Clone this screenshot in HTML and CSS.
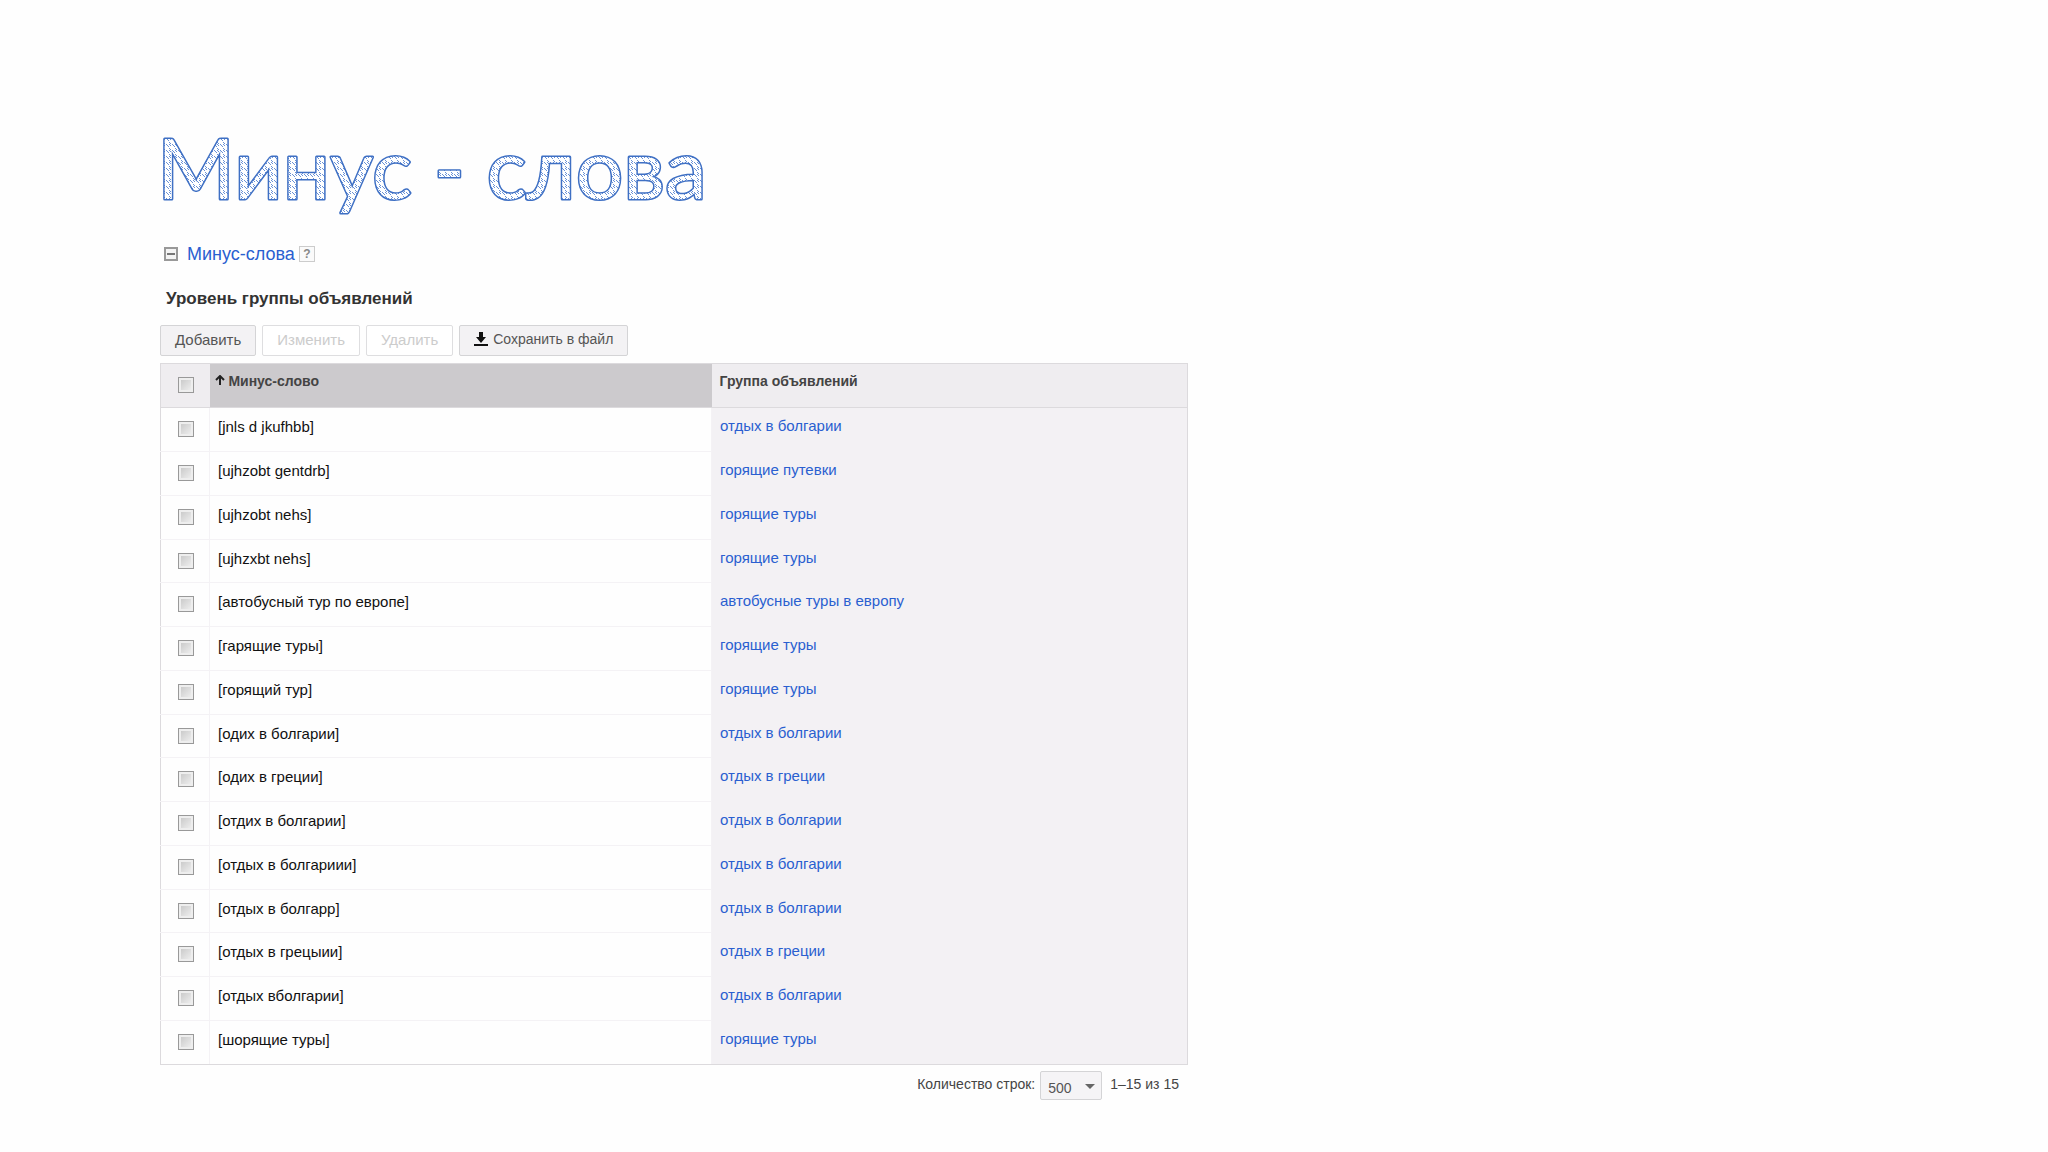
FILE: index.html
```html
<!DOCTYPE html>
<html lang="ru">

<head>
    <meta charset="UTF-8">
    <meta name="viewport" content="width=device-width, initial-scale=1.0">
    <title>Минус-слова</title>
    <link rel="stylesheet" href="styles.css">
</head>

<body>
    <main class="slide">
        <h1>
            <svg class="title" width="600" height="100">
                <defs>
                    <pattern id="hatch" width="6" height="6" patternUnits="userSpaceOnUse">
                        <rect width="6" height="6" fill="#fff" />
                        <path d="M0 0l3 3M3 4l2 2M3 0l2 2" stroke="#6a92d6" />
                    </pattern>
                </defs>
                <text x="-3" y="79">Минус - слова</text>
            </svg>
        </h1>

        <section class="panel">
            <div class="section-toggle">
                <button class="collapse" aria-label="Свернуть"></button>
                <a href="#">Минус-слова</a>
                <button class="help" aria-label="Справка">?</button>
            </div>

            <h2>Уровень группы объявлений</h2>

            <div class="toolbar">
                <button class="btn">Добавить</button>
                <button class="btn" disabled>Изменить</button>
                <button class="btn" disabled>Удалить</button>
                <button class="btn btn-download">
                    <svg width="14" height="14" viewBox="0 0 14 14">
                        <path d="M5 0h4v5h3L7 11 2 5h3z M0 12h14v2H0z" fill="#111" />
                    </svg>
                    Сохранить в файл
                </button>
            </div>

            <table class="keywords">
                <thead>
                    <tr>
                        <th class="check"><input type="checkbox" aria-label="Выбрать все"></th>
                        <th class="sorted">
                            <svg width="10" height="10" viewBox="0 0 10 10">
                                <path d="M5 10V2M1 5l4-4 4 4" fill="none" stroke="#222" stroke-width="2" />
                            </svg>
                            Минус-слово
                        </th>
                        <th class="group">Группа объявлений</th>
                    </tr>
                </thead>
                <tbody id="rows"></tbody>
            </table>

            <div class="pager">
                <label for="pageSize">Количество строк:</label>
                <div class="select-wrap">
                    <select id="pageSize">
                        <option>50</option>
                        <option>100</option>
                        <option selected>500</option>
                    </select>
                </div>
                <span>1–15 из 15</span>
            </div>
        </section>
    </main>

    <script>
        const keywords = [
            ['[jnls d jkufhbb]', 'отдых в болгарии'],
            ['[ujhzobt gentdrb]', 'горящие путевки'],
            ['[ujhzobt nehs]', 'горящие туры'],
            ['[ujhzxbt nehs]', 'горящие туры'],
            ['[автобусный тур по европе]', 'автобусные туры в европу'],
            ['[гарящие туры]', 'горящие туры'],
            ['[горящий тур]', 'горящие туры'],
            ['[одих в болгарии]', 'отдых в болгарии'],
            ['[одих в греции]', 'отдых в греции'],
            ['[отдих в болгарии]', 'отдых в болгарии'],
            ['[отдых в болгариии]', 'отдых в болгарии'],
            ['[отдых в болгарр]', 'отдых в болгарии'],
            ['[отдых в грецыии]', 'отдых в греции'],
            ['[отдых вболгарии]', 'отдых в болгарии'],
            ['[шорящие туры]', 'горящие туры']
        ];

        document.getElementById('rows').innerHTML = keywords.map(([word, group], i) => `
            <tr>
                <td class="check"><input type="checkbox" id="kw${i}"></td>
                <td><label for="kw${i}">${word}</label></td>
                <td class="group"><a href="#">${group}</a></td>
            </tr>`).join('');
    </script>
</body>

</html>
```

FILE: styles.css
```css
* {
    box-sizing: border-box;
}

body {
    margin: 0;
    background-color: #fefefe;
    color: #444;
    font-family: "Liberation Sans", Arial, sans-serif;
    font-size: 15px;
}

a {
    color: #2a5fd0;
    text-decoration: none;
}

button,
select {
    font-family: inherit;
}

.slide {
    padding: 120px 160px 40px;
}

h1 {
    margin: 0;
    font-family: Lato, "Open Sans", sans-serif;
    font-size: 84px;
    font-weight: 400;
    line-height: 100px;
}

.title {
    display: block;
    overflow: visible;
}

.title text {
    fill: url(#hatch);
    stroke: #3f70c4;
    stroke-width: 3px;
    stroke-linejoin: round;
    paint-order: stroke;
}

.panel {
    width: 60%;
    max-width: 1028px;
    margin-top: 20px;
}

.section-toggle {
    display: flex;
    align-items: center;
    height: 28px;
    padding-left: 4px;
    font-size: 18px;
}

.collapse {
    width: 14px;
    height: 14px;
    margin-right: 9px;
    padding: 0;
    border: 2px solid #999;
    background: linear-gradient(#777, #777) center / 8px 2px no-repeat #f4f4f4;
}

.help {
    width: 16px;
    height: 16px;
    margin-left: 4px;
    padding: 0;
    border: 1px solid #ccc;
    background-color: #fafafa;
    color: #888;
    font-size: 12px;
    font-weight: bold;
    line-height: 14px;
}

h2 {
    margin: 19px 0 14px;
    padding-left: 6px;
    color: #333;
    font-size: 17px;
    line-height: 24px;
}

.toolbar {
    display: flex;
    gap: 6px;
    margin-bottom: 7px;
}

.btn {
    display: flex;
    align-items: center;
    gap: 5px;
    height: 31px;
    padding: 0 14px 3px;
    border: 1px solid #d4d4d6;
    border-radius: 2px;
    background-color: #f3f2f4;
    color: #555;
    font-size: 15px;
}

.btn:disabled {
    border-color: #dedee0;
    background-color: #fff;
    color: #ccc;
}

.btn-download {
    font-size: 14px;
}

.keywords {
    width: 100%;
    table-layout: fixed;
    border: 1px solid #dcdadd;
    border-collapse: collapse;
}

th,
td {
    height: 44px;
    padding: 9px 8px 0;
    vertical-align: top;
    text-align: left;
    line-height: 20px;
}

tbody tr:nth-child(4n) td {
    height: 43px;
}

th {
    padding-top: 7px;
    background-color: #efedf0;
    color: #444;
    font-size: 14px;
    border-bottom: 1px solid #dcdadd;
}

th.sorted {
    padding-left: 5px;
    background-color: #cccacd;
}

.sorted svg {
    vertical-align: 1px;
}

td {
    border-bottom: 1px solid #f4f2f5;
    border-right: 1px solid #f4f2f5;
    color: #111;
    font-size: 15px;
}

.check {
    width: 49px;
    padding: 13px 0 0 17px;
    line-height: 0;
}

.group {
    width: 476px;
}

td.group {
    padding-top: 8px;
    border: 0;
    background-color: #f3f1f4;
}

tbody tr:last-child td {
    border-bottom: 1px solid #dcdadd;
}

input[type="checkbox"] {
    appearance: none;
    width: 16px;
    height: 16px;
    margin: 0;
    border: 1px solid #999;
    background: linear-gradient(135deg, #c4c4c4, #f4f4f4);
    box-shadow: inset 0 0 0 2px #eee;
}

.pager {
    display: flex;
    justify-content: flex-end;
    padding: 6px 9px 0 0;
    font-size: 14px;
    line-height: 26px;
}

.select-wrap {
    position: relative;
    margin: 0 8px 0 5px;
}

.select-wrap::after {
    content: "";
    position: absolute;
    top: 13px;
    right: 7px;
    border: 5px solid transparent;
    border-top-color: #666;
    border-bottom: 0;
    pointer-events: none;
}

select {
    appearance: none;
    width: 62px;
    height: 29px;
    padding: 4px 7px 0;
    border: 1px solid #d4d4d6;
    border-radius: 2px;
    background-color: #f5f4f6;
    color: #555;
    font-size: 14px;
}
```
